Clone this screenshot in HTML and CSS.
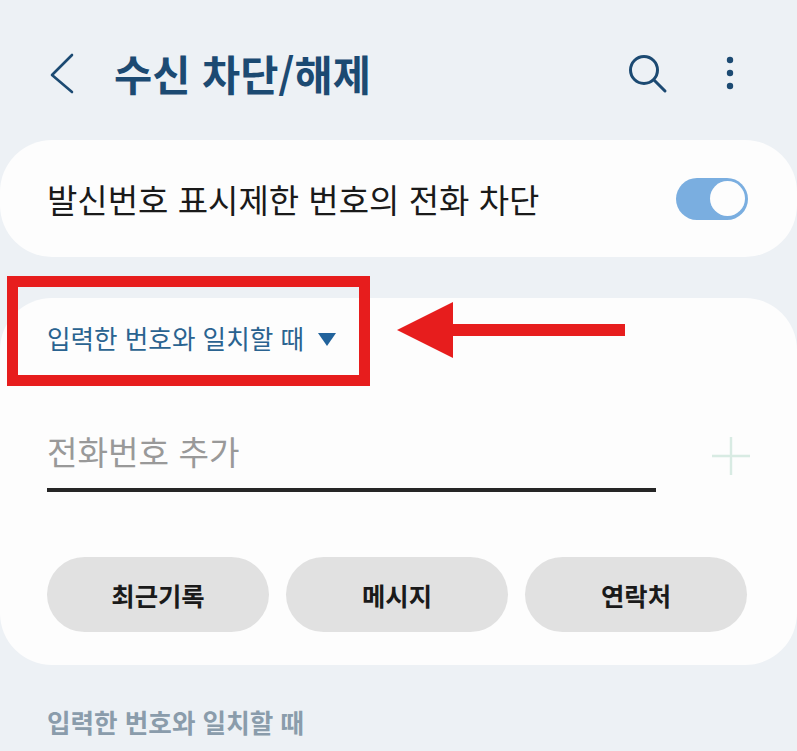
FILE: index.html
```html
<!DOCTYPE html>
<html lang="ko">
<head>
    <meta charset="UTF-8">
    <meta name="viewport" content="width=device-width, initial-scale=1.0">
    <title>수신 차단/해제</title>
    <link rel="stylesheet" href="styles.css">
</head>
<body>
    <div class="screen">
        <header class="topbar">
            <svg class="back-icon" width="30" height="44" viewBox="0 0 30 44">
                <path d="M25 4 L5 24 L25 41" fill="none" stroke="#1c4a72" stroke-width="2.6" stroke-linecap="round" stroke-linejoin="round"/>
            </svg>
            <h1 class="title">수신 차단/해제</h1>
            <svg class="search-icon" width="44" height="44" viewBox="0 0 44 44">
                <circle cx="19" cy="19" r="13.5" fill="none" stroke="#1c4a72" stroke-width="3"/>
                <path d="M29 29 L40 40" fill="none" stroke="#1c4a72" stroke-width="3" stroke-linecap="round"/>
            </svg>
            <svg class="more-icon" width="8" height="40" viewBox="0 0 8 40">
                <circle cx="4" cy="7" r="3.2" fill="#1c4a72"/>
                <circle cx="4" cy="20" r="3.2" fill="#1c4a72"/>
                <circle cx="4" cy="33" r="3.2" fill="#1c4a72"/>
            </svg>
        </header>

        <section class="card switch-card">
            <span class="switch-label">발신번호 표시제한 번호의 전화 차단</span>
            <span class="toggle"><span class="knob"></span></span>
        </section>

        <section class="card match-card">
            <div class="dropdown">
                <span>입력한 번호와 일치할 때</span>
                <span class="caret"></span>
            </div>
            <div class="add-row">
                <div class="phone-input">전화번호 추가</div>
                <svg class="plus-icon" width="40" height="40" viewBox="0 0 40 40">
                    <path d="M20 1 V39 M1 20 H39" fill="none" stroke="#d8ebe3" stroke-width="2.4"/>
                </svg>
            </div>
            <div class="source-buttons">
                <button class="pill">최근기록</button>
                <button class="pill">메시지</button>
                <button class="pill">연락처</button>
            </div>
        </section>

        <h2 class="section-title">입력한 번호와 일치할 때</h2>

        <div class="callout-box"></div>
        <svg class="callout-arrow" width="230" height="58" viewBox="0 0 230 58">
            <path d="M0 28 L56 0 V22 H228 V34 H56 V56 Z" fill="#e71d1d"/>
        </svg>
    </div>
</body>
</html>
```

FILE: styles.css
```css
html, body { margin: 0; padding: 0; }
body { background: #edf1f5; font-family: "Noto Sans CJK KR", "Noto Sans", sans-serif; }
.screen { position: relative; width: 797px; height: 751px; overflow: hidden; background: #edf1f5; }

.topbar { display: flex; align-items: center; height: 140px; box-sizing: border-box; padding: 6px 63px 0 47px; }
.back-icon { flex: none; margin-right: 37px; }
.title { flex: 1; margin: 2px 0 0; font-size: 41.5px; font-weight: 700; color: #1c4a72; line-height: 1; }
.search-icon { flex: none; margin-right: 57px; }
.more-icon { flex: none; }

.card { background: #fdfdfd; border-radius: 52px; }
.switch-card { display: flex; align-items: center; justify-content: space-between; height: 117px; padding: 0 49px 0 47px; }
.switch-label { font-size: 33px; color: #1a1a1a; }
.toggle { display: flex; align-items: center; justify-content: flex-end; width: 72px; height: 42px; box-sizing: border-box; padding-right: 3px; border-radius: 21px; background: #7aaee0; }
.knob { width: 35px; height: 35px; border-radius: 50%; background: #fdfdfd; }

.match-card { margin-top: 41px; height: 367px; box-sizing: border-box; padding: 0 50px 0 47px; }
.dropdown { display: flex; align-items: center; height: 78px; font-size: 25.6px; color: #2a6390; }
.caret { width: 0; height: 0; margin-left: 14px; margin-top: 5px; border-left: 9.5px solid transparent; border-right: 9.5px solid transparent; border-top: 13px solid #22639c; }

.add-row { display: flex; justify-content: space-between; align-items: center; margin-top: 43px; }
.phone-input { width: 609px; height: 73px; box-sizing: border-box; padding-bottom: 6px; display: flex; align-items: center; border-bottom: 4px solid #262626; font-size: 33.2px; color: #999; }
.plus-icon { flex: none; margin-right: -4px; }

.source-buttons { display: flex; gap: 17px; margin-top: 65px; }
.pill { flex: 1; height: 75px; border: none; border-radius: 38px; background: #e1e1e1; font-family: inherit; font-size: 25.4px; font-weight: 700; color: #1a1a1a; }

.section-title { margin: 39px 0 0 47px; font-size: 25.6px; font-weight: 700; color: #8a9cab; line-height: 36px; }

.callout-box { position: absolute; left: 7px; top: 276px; width: 363px; height: 110px; box-sizing: border-box; border: 11px solid #e71d1d; }
.callout-arrow { position: absolute; left: 397px; top: 302px; }
```
